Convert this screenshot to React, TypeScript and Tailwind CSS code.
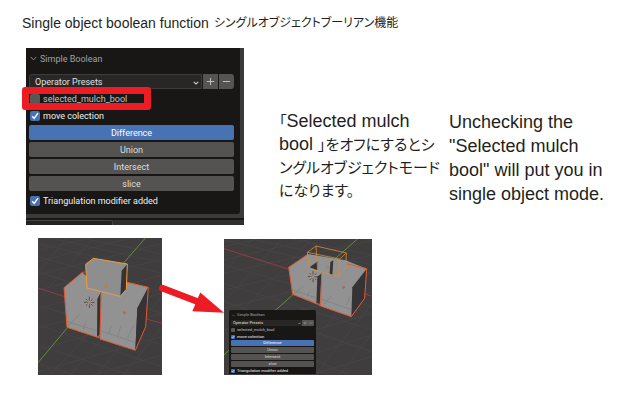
import { Minus, Plus } from "lucide-react";
import clsx from "clsx";

type PanelProps = { mini?: boolean };

function Check({ label, on, mini, dim }: { label: string; on?: boolean; mini?: boolean; dim?: boolean }) {
  return (
    <label className={clsx("flex items-center", mini ? "h-[7px] gap-[2px]" : "h-[17px] gap-[3px] pl-px", dim ? "text-[#c4c4c4]" : "text-[#f0f0f0]")}>
      <span className="relative flex">
        <input
          type="checkbox"
          defaultChecked={on}
          className={clsx("peer appearance-none bg-[#5a5856] checked:bg-[#4772b3]", mini ? "size-1 rounded-[1px]" : "size-[10px] rounded-[2px]")}
        />
        <svg viewBox="0 0 10 10" className="pointer-events-none absolute inset-0 hidden size-full peer-checked:block">
          <path d="M2.2 5.2 4.2 7.4 8 2.2" fill="none" stroke="#fff" strokeWidth="1.4" />
        </svg>
      </span>
      {label}
    </label>
  );
}

function BooleanPanel({ mini }: PanelProps) {
  const step = clsx("flex items-center justify-center bg-[#545454] text-[#c8c8c8]", mini ? "w-[6px]" : "w-[15px]");
  const icon = mini ? "size-[4px]" : "size-[11px]";
  return (
    <section
      className={clsx(
        "bg-[#181716] font-['Roboto','Noto_Sans',sans-serif]",
        mini ? "w-[87px] rounded-t-[2px] px-[2px] text-[4px] leading-[6px]" : "rounded-br-[3px] px-[3px] pr-[6px] pb-[5px] text-[9px] leading-[14px]",
      )}
    >
      <h2 className={clsx("flex items-center text-[#a2a2a2]", mini ? "h-[10px] gap-[2px] pl-px" : "h-[26px] gap-[3px] pl-[1px] pb-[5px]")}>
        <svg viewBox="0 0 8 8" className={mini ? "size-[3px]" : "size-[7px]"}>
          <path d="M.8 2.2 4 5.6 7.2 2.2" fill="none" stroke="#9b9b9b" />
        </svg>
        Simple Boolean
      </h2>
      <div className={clsx("flex", mini ? "h-[6px]" : "h-[15px] gap-px")}>
        <div className={clsx("relative flex-1 bg-[#282726]", mini ? "rounded-l-[1px]" : "rounded-l-[3px] border border-[#3c3c3c]")}>
          <select
            aria-label="Operator Presets"
            className={clsx("block size-full appearance-none bg-transparent text-[#e0e0e0]", mini ? "pl-[2px]" : "pl-[5px]")}
          >
            <option>Operator Presets</option>
          </select>
          <svg viewBox="0 0 8 8" className={clsx("pointer-events-none absolute", mini ? "top-[2px] right-[1px] size-[3px]" : "top-[5px] right-[2px] size-[6px]")}>
            <path d="M1 2.4 4 5.4 7 2.4" fill="none" stroke="#d0d0d0" strokeWidth="1.5" />
          </svg>
        </div>
        <button aria-label="Add preset" className={step}><Plus className={icon} strokeWidth={2} /></button>
        <button aria-label="Remove preset" className={clsx(step, mini ? "rounded-r-[1px]" : "rounded-r-[3px]")}><Minus className={icon} strokeWidth={2} /></button>
      </div>
      <div className={mini ? "" : "pt-px pb-px"}>
        <Check label="selected_mulch_bool" mini={mini} dim />
        <Check label="move colection" on mini={mini} />
      </div>
      <div className={clsx("flex flex-col", mini ? "gap-px" : "gap-[2px] pb-px")}>
        {["Difference", "Union", "Intersect", "slice"].map((name, i) => (
          <button
            key={name}
            className={clsx(
              mini ? "h-[6px] rounded-[1px]" : "h-[15px] rounded-[2px]",
              i === 0 ? "bg-[#4772b3] text-white" : "bg-[#545351] text-[#dedede]",
            )}
          >
            {name}
          </button>
        ))}
      </div>
      <Check label="Triangulation modifier added" on mini={mini} />
    </section>
  );
}

function Cursor3D({ x, y }: { x: number; y: number }) {
  return (
    <g transform={`translate(${x} ${y})`} fill="none">
      <circle r="8" stroke="#d9d0cc" strokeWidth="2" />
      <circle r="8" stroke="#b4483c" strokeWidth="2" strokeDasharray="4 4" />
      <path d="M-16 0H-4M4 0H16M0-17V-4M0 4V17M-10-10-5-5M10-10 5-5M-10 10-5 5M10 10 5 5" stroke="#34302e" strokeWidth="2" />
    </g>
  );
}

const floor = "M24 60 180 24M24 95 300 24M24 135 396 40M24 180 396 88M24 235 396 135M24 295 396 190M24 360 396 250M24 425 396 320M190 435 396 375M24 40 396 130M60 24 396 98M150 24 396 72M24 80 396 185M24 125 396 250M24 225 396 345M24 285 396 410M24 345 300 435M24 400 130 435M200 435 396 200M280 435 396 290M120 435 330 200M60 435 270 210M24 210 190 24M24 130 110 24";

function BlocksBefore() {
  return (
    <svg viewBox="24 24 372 411" className="h-[137px] w-[124px] shrink-0 bg-[#3f3d3d]" role="img" aria-label="Three overlapping blocks">
      <path d={floor} stroke="#4b4949" strokeWidth="1.6" fill="none" />
      <path d="M24 174 110 202M330 262 396 280" stroke="#963944" strokeWidth="3" />
      <path d="M346 24 280 100M24 398 120 284" stroke="#648d2f" strokeWidth="3" />
      <path d="M102 173 157 127 214 184 206 323 111 292Z" fill="#929292" />
      <path d="M214 184 202 207 201 321 210 313Z" fill="#353333" />
      <path d="M212 185 290 157 355 172 322 235 316 361 210 327Z" fill="#929292" />
      <path d="M355 172 322 235 316 361 347 290Z" fill="#353333" />
      <path d="M111 292 150 251" stroke="#718a56" strokeWidth="2" />
      <path d="M111 275 200 302M214 303 315 337M235 310 245 287M262 320 272 290M293 323 310 285M160 300 166 278" stroke="#7c7c7c" strokeWidth="2" />
      <path d="M166 126 157 127 102 173 111 292 206 323 210 313 210 327 316 361 347 290 355 172 292 157M214 186 210 313" fill="none" stroke="#e8582c" strokeWidth="3" />
      <path d="M167 103 190 85 292 102 289 178 271 199 171 174Z" fill="#8e8e8e" />
      <path d="M292 102 275 122 271 198 289 178Z" fill="#353333" />
      <path d="M167 103 190 85 292 102 289 178 271 199 171 174Z" fill="none" stroke="#f29a3d" strokeWidth="3" />
      <circle cx="229" cy="169" r="3" fill="#f09b35" stroke="#6d5136" />
      <circle cx="283" cy="248" r="3" fill="#e85f2a" stroke="#77503c" />
      <Cursor3D x={178} y={217} />
    </svg>
  );
}

function BlocksAfter() {
  return (
    <svg viewBox="27 27 444 408" className="block h-[136px] w-[148px] bg-[#3f3d3d]" role="img" aria-label="Blocks after the cut">
      <path
        d="M27 50 130 27M27 90 290 27M27 130 471 32M27 180 471 75M27 235 471 125M27 300 471 185M300 300 471 250M300 370 471 315M300 430 471 380M27 30 471 135M110 27 471 105M230 27 471 75M27 105 471 230M27 160 471 300M27 215 471 365M300 390 400 435M27 215 200 27M27 130 110 27M80 245 290 27M300 330 471 120M300 435 471 220M375 435 471 310"
        stroke="#4b4949" strokeWidth="1.6" fill="none"
      />
      <path d="M27 56 222 118M432 186 471 199" stroke="#963944" strokeWidth="3" />
      <path d="M427 27 355 91M235 193 180 242M27 375 44 359" stroke="#648d2f" strokeWidth="3" />
      <path d="M221 112 278 72 392 91 455 116 449 205 409 260 317 228 233 193Z" fill="#929292" />
      <path d="M284 112 308 94 308 121Z" fill="#353333" />
      <path d="M346 96 355 91 352 136 344 131Z" fill="#353333" />
      <path d="M320 130 307 140 304 223 314 224Z" fill="#353333" />
      <path d="M455 116 412 172 409 260 449 205Z" fill="#353333" />
      <path d="M235 193 265 169" stroke="#718a56" strokeWidth="2" />
      <path d="M233 180 305 204M318 207 410 239M328 222 350 198M277 200 283 184M395 226 405 199" stroke="#7c7c7c" strokeWidth="2" />
      <path d="M278 74 221 112 233 193 313 223 317 228 409 260 449 205 455 116 394 101M320 128 317 228" fill="none" stroke="#e8582c" strokeWidth="3" />
      <path d="M277 67 303 48 394 69 392 115 370 139 284 117ZM277 67 374 87 370 139M374 87 394 69M303 48 308 121" fill="none" stroke="#d78b39" strokeWidth="2.4" />
      <circle cx="337" cy="112" r="3" fill="#f09b35" stroke="#6d5136" />
      <circle cx="386" cy="172" r="3" fill="#e85f2a" stroke="#77503c" />
      <Cursor3D x={294} y={140} />
    </svg>
  );
}

export default function App() {
  return (
    <main className="bg-white pt-[14px] font-['Liberation_Sans','Noto_Sans_CJK_JP',sans-serif] text-[#231f20]">
      <h1 className="flex items-center gap-[5px] pl-[22px] text-[14px] leading-[18px]">
        <span>Single object boolean function</span>
        <span lang="ja" className="text-[12px] [font-feature-settings:'palt']">シングルオブジェクトブーリアン機能</span>
      </h1>

      <div className="flex pt-4 pl-[26px]">
        <div className="relative w-[218px] shrink-0 bg-[#3b3939] pr-1">
          <BooleanPanel />
          <div className="-mr-1 h-1" />
          <div className="-mr-1 h-[2px] bg-[#181716]" />
          <div className="-mr-1 h-[5px] bg-[#302e2e]">
            <div className="h-full w-[87px] rounded-tr-[2px] border-t border-r border-[#454343] bg-[#242323]" />
          </div>
          <div className="pointer-events-none absolute top-[39px] -left-1 h-[23px] w-[129px] rounded-[3px] border-[7px] border-[#ed1c24]" />
        </div>
        <p lang="ja" className="w-[170px] shrink-0 ml-[35px] pt-[62px] text-[18px] leading-[23px] whitespace-nowrap">
          <span className="text-[15px] [font-feature-settings:'palt']">「</span>Selected mulch
          <br />
          bool <span className="text-[15px] [font-feature-settings:'palt']">」をオフにするとシ<br />ングルオブジェクトモード<br />になります。</span>
        </p>
        <p className="max-w-[160px] pt-[62px] text-[18px] leading-6">
          Unchecking the "Selected mulch bool" will put you in single object mode.
        </p>
      </div>

      <div className="flex items-start pt-[13px] pl-[38px]">
        <BlocksBefore />
        <svg viewBox="22 160 203 96" className="mt-[45px] -ml-1 -mr-px h-8 w-[67px] shrink-0" role="img" aria-label="becomes">
          <path d="M35 175 140 215" stroke="#ed1c24" strokeWidth="20" strokeLinecap="round" />
          <path d="M150 188 222 250 126 245Z" fill="#ed1c24" />
        </svg>
        <div className="relative mt-px h-[136px] w-[148px] shrink-0 overflow-hidden">
          <BlocksAfter />
          <div className="absolute top-[71px] left-[5px]">
            <BooleanPanel mini />
          </div>
        </div>
      </div>
    </main>
  );
}
